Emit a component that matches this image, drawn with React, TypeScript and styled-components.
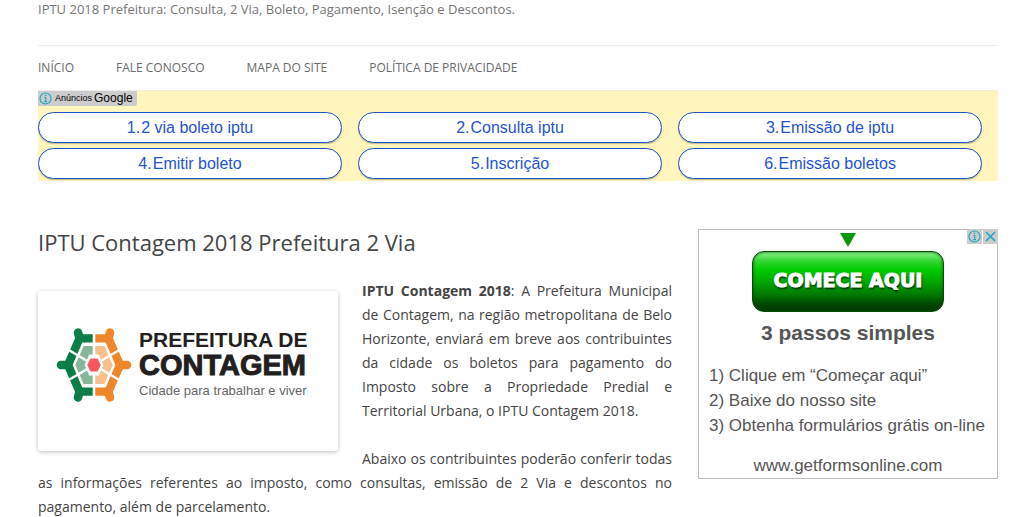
import React from "react";
import styled, { createGlobalStyle } from "styled-components";

const GlobalStyle = createGlobalStyle`
  * { box-sizing: border-box; }
  body {
    margin: 0;
    background: #fff;
    color: #444;
    font-family: "Open Sans", sans-serif;
    font-size: 14px;
    line-height: 24px;
  }
`;

const arial = `"Liberation Sans", Arial, sans-serif`;

const Page = styled.div`
  padding: 0 37px 0 38px;
`;

const Tagline = styled.p`
  margin: 0;
  padding-bottom: 26px;
  font-size: 13px;
  line-height: 19px;
  color: #757575;
`;

const Nav = styled.nav`
  border-top: 1px solid #ededed;
  border-bottom: 1px solid #ededed;
`;

const Menu = styled.ul`
  display: flex;
  gap: 42px;
  margin: 0;
  padding: 0;
  list-style: none;
`;

const MenuLink = styled.a`
  display: block;
  font-size: 12px;
  line-height: 44px;
  color: #6a6a6a;
  text-transform: uppercase;
  text-decoration: none;
`;

const LinkAd = styled.section`
  padding-bottom: 2px;
  background: #fff6be;
  font-family: ${arial};
`;

const AdLabel = styled.div`
  display: flex;
  align-items: center;
  gap: 2px;
  width: max-content;
  height: 15px;
  padding: 0 4px 0 0;
  border-radius: 0 0 2px 0;
  background: #ccc;
  color: #000;
  font-size: 12px;
  line-height: 15px;
`;

const AdLabelSmall = styled.span`
  font-size: 9px;
`;

const PillGrid = styled.div`
  display: grid;
  grid-template-columns: repeat(3, 1fr);
  gap: 5px 16px;
  padding: 6px 16px 0 0;
`;

const Pill = styled.a`
  display: flex;
  justify-content: center;
  gap: 1px;
  height: 31px;
  border: 1px solid #1a55c4;
  border-radius: 16px;
  background: #fff;
  box-shadow: 0 1px 1px rgba(0, 0, 0, 0.25);
  color: #1f53d0;
  font-size: 16px;
  line-height: 29px;
  text-decoration: none;
`;

const Columns = styled.div`
  display: grid;
  grid-template-columns: minmax(0, 1fr) 300px;
  gap: 26px;
  align-items: start;
  padding-top: 48px;
`;

const Title = styled.h1`
  margin: 0;
  padding-bottom: 24px;
  font-size: 22px;
  font-weight: 400;
  line-height: 26px;
`;

const Paragraph = styled.p`
  margin: 0 0 24px;
  text-align: justify;
`;

const LogoCard = styled.div`
  float: left;
  display: flex;
  align-items: center;
  gap: 6px;
  width: 300px;
  height: 160px;
  margin: 12px 24px 12px 0;
  padding: 0 0 13px 18px;
  border-radius: 3px;
  background: #fff;
  box-shadow: 0 1px 4px rgba(0, 0, 0, 0.25);
  font-family: ${arial};
`;

const LogoText = styled.div`
  padding-top: 2px;
  color: #231f20;
  white-space: nowrap;
`;

const LogoTop = styled.div`
  font-size: 21px;
  font-weight: 700;
  line-height: 22px;
`;

const LogoName = styled.div`
  font-size: 29px;
  font-weight: 700;
  line-height: 28px;
  -webkit-text-stroke: 1px #231f20;
`;

const LogoMotto = styled.div`
  font-size: 13px;
  line-height: 24px;
  color: #666;
`;

const SideAd = styled.aside`
  position: relative;
  display: flex;
  flex-direction: column;
  align-items: center;
  height: 250px;
  padding-top: 3px;
  border: 1px solid #bbb;
  font-family: ${arial};
  color: #555;
`;

const AdControls = styled.div`
  position: absolute;
  top: -1px;
  right: -1px;
  display: flex;
  gap: 1px;
`;

const AdControl = styled.button`
  display: block;
  width: 15px;
  height: 15px;
  padding: 0;
  border: 0;
  background: #ccc;
`;

const StartButton = styled.button`
  width: 192px;
  height: 61px;
  margin-top: 4px;
  padding: 0 0 3px;
  border: 1px solid #005000;
  border-radius: 12px;
  background: linear-gradient(#8af58a 0%, #2fd52f 16%, #00cc00 30%, #00a800 50%, #007a00 72%, #004400 90%, #003c00 100%);
  box-shadow: inset 0 0 3px #004800;
  color: #fff;
  font-family: "DejaVu Sans", ${arial};
  font-size: 19px;
  font-weight: 700;
  -webkit-text-stroke: 1px #fff;
  text-shadow: 1px 2px 2px #002800;
`;

const AdHeading = styled.h2`
  margin: 8px 0 0;
  font-size: 21px;
  line-height: 26px;
`;

const Steps = styled.ol`
  align-self: stretch;
  margin: 0;
  padding: 17px 0 0 10px;
  list-style: none;
  font-size: 17px;
  line-height: 25px;
  white-space: nowrap;
`;

const AdLink = styled.a`
  margin-top: 15px;
  font-size: 17px;
  line-height: 25px;
  color: inherit;
  text-decoration: none;
`;

const InfoIcon = () => (
  <svg width="15" height="15" viewBox="0 0 15 15" fill="none" stroke="#22a7bd" aria-hidden="true" display="block">
    <circle cx="7.5" cy="7.5" r="5.5" strokeWidth="1.2" />
    <path d="M6.3 6.5H7.7V10.6M6.2 10.7H9" strokeWidth="1.2" />
    <circle cx="7.5" cy="4.4" r="0.8" fill="#22a7bd" stroke="none" />
  </svg>
);

const CloseIcon = () => (
  <svg width="15" height="15" viewBox="0 0 15 15" stroke="#22a7bd" strokeWidth="1.7" aria-hidden="true" display="block">
    <path d="M3 3L12 12M12 3L3 12" />
  </svg>
);

const Emblem = () => (
  <svg width="77" height="76" viewBox="-38 -38 77 76" role="img" aria-label="Contagem">
    <g fill="none" strokeWidth="8.4">
      <path stroke="#0b7d48" d="M0 -26.6H-14.5L-26 0L-14.5 26.6H0" />
      <path stroke="#f0862a" d="M0 -26.6H14.5L26 0L14.5 26.6H0" />
    </g>
    <g strokeWidth="8.6" strokeLinecap="round">
      <path stroke="#0b7d48" d="M-14.5 -27L-16 -32.4M-14.5 27L-16 32.4M-26 0H-33" />
      <path stroke="#f0862a" d="M14.5 -27L16 -32.4M14.5 27L16 32.4M26 0H33" />
    </g>
    <g fill="none" strokeWidth="8.6">
      <path stroke="#86b597" d="M0 -14.8H-7.6L-14 0L-7.6 14.8H0" />
      <path stroke="#f8c08d" d="M0 -14.8H7.6L14 0L7.6 14.8H0" />
    </g>
    <path stroke="#fff" strokeWidth="2.6" d="M0 -34V34M-27 -16L27 16M-27 16L27 -16" />
    <path fill="#f5565f" stroke="#fff" strokeWidth="2.2" d="M-4.2 -7.5H4.2L8 0L4.2 7.5H-4.2L-8 0Z" />
  </svg>
);

const menu = ["Início", "Fale Conosco", "Mapa do Site", "Política de Privacidade"];
const adLinks = ["2 via boleto iptu", "Consulta iptu", "Emissão de iptu", "Emitir boleto", "Inscrição", "Emissão boletos"];

export default function App() {
  return (
    <Page>
      <GlobalStyle />
      <header>
        <Tagline>IPTU 2018 Prefeitura: Consulta, 2 Via, Boleto, Pagamento, Isenção e Descontos.</Tagline>
        <Nav>
          <Menu>
            {menu.map((item) => (
              <li key={item}>
                <MenuLink href="#">{item}</MenuLink>
              </li>
            ))}
          </Menu>
        </Nav>
      </header>
      <LinkAd>
        <AdLabel>
          <InfoIcon />
          <AdLabelSmall>Anúncios</AdLabelSmall>
          <span>Google</span>
        </AdLabel>
        <PillGrid>
          {adLinks.map((label, i) => (
            <Pill href="#" key={label}>
              <span>{i + 1}.</span>
              <span>{label}</span>
            </Pill>
          ))}
        </PillGrid>
      </LinkAd>
      <Columns>
        <main>
          <Title>IPTU Contagem 2018 Prefeitura 2 Via</Title>
          <LogoCard>
            <Emblem />
            <LogoText>
              <LogoTop>PREFEITURA DE</LogoTop>
              <LogoName>CONTAGEM</LogoName>
              <LogoMotto>Cidade para trabalhar e viver</LogoMotto>
            </LogoText>
          </LogoCard>
          <Paragraph>
            <strong>IPTU Contagem 2018</strong>: A Prefeitura Municipal de Contagem, na região metropolitana de Belo
            Horizonte, enviará em breve aos contribuintes da cidade os boletos para pagamento do Imposto sobre a
            Propriedade Predial e Territorial Urbana, o IPTU Contagem 2018.
          </Paragraph>
          <Paragraph>
            Abaixo os contribuintes poderão conferir todas as informações referentes ao imposto, como consultas,
            emissão de 2 Via e descontos no pagamento, além de parcelamento.
          </Paragraph>
        </main>
        <SideAd>
          <AdControls>
            <AdControl aria-label="Informações do anúncio">
              <InfoIcon />
            </AdControl>
            <AdControl aria-label="Fechar anúncio">
              <CloseIcon />
            </AdControl>
          </AdControls>
          <svg width="16" height="14" viewBox="0 0 16 14" aria-hidden="true">
            <path d="M0 0H16L8 14Z" fill="#0a960a" />
          </svg>
          <StartButton>COMECE AQUI</StartButton>
          <AdHeading>3 passos simples</AdHeading>
          <Steps>
            <li>1) Clique em “Começar aqui”</li>
            <li>2) Baixe do nosso site</li>
            <li>3) Obtenha formulários grátis on-line</li>
          </Steps>
          <AdLink href="#">www.getformsonline.com</AdLink>
        </SideAd>
      </Columns>
    </Page>
  );
}
